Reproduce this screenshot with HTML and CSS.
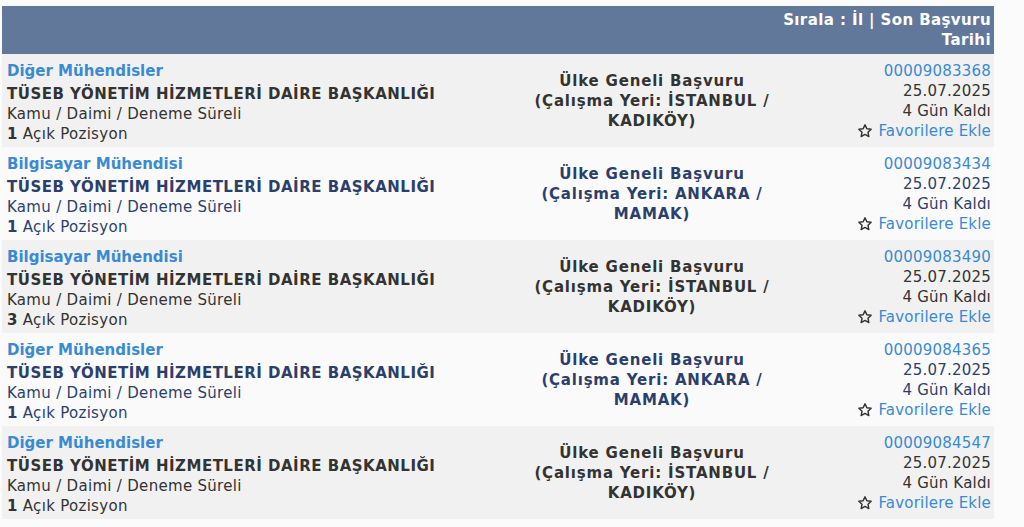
FILE: index.html
```html
<!DOCTYPE html>
<html lang="tr">
<head>
    <meta charset="UTF-8">
    <meta name="viewport" content="width=device-width, initial-scale=1.0">
    <title>İlanlar</title>
    <link rel="stylesheet" href="styles.css">
</head>
<body>
    <div class="listing">
        <div class="head">
            <div class="head-sort">Sırala : <a href="#">İl</a> | <a href="#">Son Başvuru Tarihi</a></div>
        </div>

        <div class="row">
            <div class="col-main">
                <a class="title" href="#">Diğer Mühendisler</a>
                <div class="org">TÜSEB YÖNETİM HİZMETLERİ DAİRE BAŞKANLIĞI</div>
                <div>Kamu / Daimi / Deneme Süreli</div>
                <div><b>1</b> Açık Pozisyon</div>
            </div>
            <div class="col-place">Ülke Geneli Başvuru<br>(Çalışma Yeri: İSTANBUL / KADIKÖY)</div>
            <div class="col-date">
                <a class="no" href="#">00009083368</a>
                <div>25.07.2025</div>
                <div>4 Gün Kaldı</div>
                <a class="fav" href="#"><svg class="star" viewBox="0 0 24 24"><path d="M12 2.8l2.8 5.9 6.4.8-4.7 4.4 1.2 6.4L12 17.2l-5.7 3.1 1.2-6.4-4.7-4.4 6.4-.8z"/></svg>Favorilere Ekle</a>
            </div>
        </div>

        <div class="row alt">
            <div class="col-main">
                <a class="title" href="#">Bilgisayar Mühendisi</a>
                <div class="org">TÜSEB YÖNETİM HİZMETLERİ DAİRE BAŞKANLIĞI</div>
                <div>Kamu / Daimi / Deneme Süreli</div>
                <div><b>1</b> Açık Pozisyon</div>
            </div>
            <div class="col-place">Ülke Geneli Başvuru<br>(Çalışma Yeri: ANKARA / MAMAK)</div>
            <div class="col-date">
                <a class="no" href="#">00009083434</a>
                <div>25.07.2025</div>
                <div>4 Gün Kaldı</div>
                <a class="fav" href="#"><svg class="star" viewBox="0 0 24 24"><path d="M12 2.8l2.8 5.9 6.4.8-4.7 4.4 1.2 6.4L12 17.2l-5.7 3.1 1.2-6.4-4.7-4.4 6.4-.8z"/></svg>Favorilere Ekle</a>
            </div>
        </div>

        <div class="row">
            <div class="col-main">
                <a class="title" href="#">Bilgisayar Mühendisi</a>
                <div class="org">TÜSEB YÖNETİM HİZMETLERİ DAİRE BAŞKANLIĞI</div>
                <div>Kamu / Daimi / Deneme Süreli</div>
                <div><b>3</b> Açık Pozisyon</div>
            </div>
            <div class="col-place">Ülke Geneli Başvuru<br>(Çalışma Yeri: İSTANBUL / KADIKÖY)</div>
            <div class="col-date">
                <a class="no" href="#">00009083490</a>
                <div>25.07.2025</div>
                <div>4 Gün Kaldı</div>
                <a class="fav" href="#"><svg class="star" viewBox="0 0 24 24"><path d="M12 2.8l2.8 5.9 6.4.8-4.7 4.4 1.2 6.4L12 17.2l-5.7 3.1 1.2-6.4-4.7-4.4 6.4-.8z"/></svg>Favorilere Ekle</a>
            </div>
        </div>

        <div class="row alt">
            <div class="col-main">
                <a class="title" href="#">Diğer Mühendisler</a>
                <div class="org">TÜSEB YÖNETİM HİZMETLERİ DAİRE BAŞKANLIĞI</div>
                <div>Kamu / Daimi / Deneme Süreli</div>
                <div><b>1</b> Açık Pozisyon</div>
            </div>
            <div class="col-place">Ülke Geneli Başvuru<br>(Çalışma Yeri: ANKARA / MAMAK)</div>
            <div class="col-date">
                <a class="no" href="#">00009084365</a>
                <div>25.07.2025</div>
                <div>4 Gün Kaldı</div>
                <a class="fav" href="#"><svg class="star" viewBox="0 0 24 24"><path d="M12 2.8l2.8 5.9 6.4.8-4.7 4.4 1.2 6.4L12 17.2l-5.7 3.1 1.2-6.4-4.7-4.4 6.4-.8z"/></svg>Favorilere Ekle</a>
            </div>
        </div>

        <div class="row">
            <div class="col-main">
                <a class="title" href="#">Diğer Mühendisler</a>
                <div class="org">TÜSEB YÖNETİM HİZMETLERİ DAİRE BAŞKANLIĞI</div>
                <div>Kamu / Daimi / Deneme Süreli</div>
                <div><b>1</b> Açık Pozisyon</div>
            </div>
            <div class="col-place">Ülke Geneli Başvuru<br>(Çalışma Yeri: İSTANBUL / KADIKÖY)</div>
            <div class="col-date">
                <a class="no" href="#">00009084547</a>
                <div>25.07.2025</div>
                <div>4 Gün Kaldı</div>
                <a class="fav" href="#"><svg class="star" viewBox="0 0 24 24"><path d="M12 2.8l2.8 5.9 6.4.8-4.7 4.4 1.2 6.4L12 17.2l-5.7 3.1 1.2-6.4-4.7-4.4 6.4-.8z"/></svg>Favorilere Ekle</a>
            </div>
        </div>
    </div>
</body>
</html>
```

FILE: styles.css
```css
body {
    font-family: "DejaVu Sans", Verdana, sans-serif;
    font-size: 15px;
    line-height: 20px;
    letter-spacing: 0.3px;
    color: #333;
    background-color: #fbfbfc;
    margin: 0;
}
a {
    color: #3a8ad2;
    text-decoration: none;
}
.listing {
    width: 992px;
    margin: 6px 0 0 2px;
}
.head {
    background-color: #62789a;
    color: #fff;
    font-weight: bold;
    letter-spacing: 0.4px;
    display: flex;
    justify-content: flex-end;
    padding: 4px 3px 4px 0;
}
.head-sort {
    width: 215px;
    text-align: right;
}
.head a {
    color: #fff;
}
.row {
    display: flex;
    background-color: #f1f1f1;
    padding: 7px 3px 3px 5px;
}
.row.alt {
    background-color: #fafafb;
    color: #2c3f6a;
}
.col-main {
    width: 520px;
}
.title {
    display: block;
    font-weight: bold;
    letter-spacing: 0;
    margin-bottom: 3px;
}
.org {
    font-weight: bold;
    letter-spacing: 0.5px;
}
.col-place {
    width: 250px;
    font-weight: bold;
    letter-spacing: 0.8px;
    text-align: center;
    align-self: center;
    padding-bottom: 4px;
}
.col-date {
    flex: 1;
    text-align: right;
    letter-spacing: 0.2px;
    display: flex;
    flex-direction: column;
    align-items: flex-end;
}
.fav {
    display: flex;
    align-items: center;
    gap: 5px;
}
.star {
    width: 16px;
    height: 16px;
    fill: none;
    stroke: #333;
    stroke-width: 2.2;
    stroke-linejoin: round;
}
```
